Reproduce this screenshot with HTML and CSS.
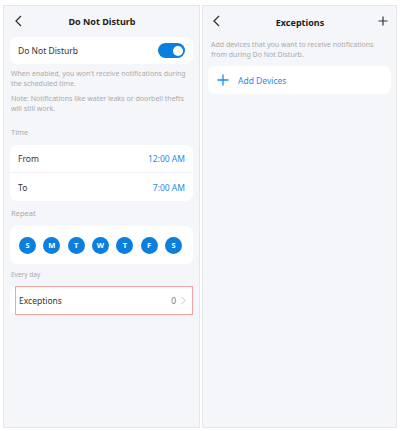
FILE: index.html
```html
<!DOCTYPE html>
<html lang="en">
<head>
    <meta charset="UTF-8">
    <title>Do Not Disturb</title>
    <link rel="stylesheet" href="styles.css">
</head>
<body>
    <div class="screens">
        <div class="screen">
            <div class="nav-bar">
                <svg class="nav-icon" width="10" height="12" viewBox="0 0 10 12"><path d="M7 1 L2 6 L7 11" fill="none" stroke="#333" stroke-width="1.3"/></svg>
                <div class="nav-title">Do Not Disturb</div>
                <span class="nav-spacer"></span>
            </div>
            <div class="card row">
                <span>Do Not Disturb</span>
                <span class="toggle"><span class="knob"></span></span>
            </div>
            <p class="hint first">When enabled, you won't receive notifications during the scheduled time.</p>
            <p class="hint">Note: Notifications like water leaks or doorbell thefts will still work.</p>
            <div class="section-label">Time</div>
            <div class="card">
                <div class="row divided">
                    <span>From</span>
                    <span class="value">12:00 AM</span>
                </div>
                <div class="row">
                    <span>To</span>
                    <span class="value">7:00 AM</span>
                </div>
            </div>
            <div class="section-label">Repeat</div>
            <div class="card days">
                <span class="day">S</span>
                <span class="day">M</span>
                <span class="day">T</span>
                <span class="day">W</span>
                <span class="day">T</span>
                <span class="day">F</span>
                <span class="day">S</span>
            </div>
            <div class="section-label small">Every day</div>
            <div class="card">
                <div class="row highlighted">
                    <span>Exceptions</span>
                    <span class="count">0
                        <svg width="6" height="9" viewBox="0 0 6 9"><path d="M1.5 1 L5 4.5 L1.5 8" fill="none" stroke="#c4c4c8" stroke-width="1"/></svg>
                    </span>
                </div>
            </div>
        </div>

        <div class="screen right">
            <div class="nav-bar">
                <svg class="nav-icon" width="10" height="12" viewBox="0 0 10 12"><path d="M7 1 L2 6 L7 11" fill="none" stroke="#333" stroke-width="1.3"/></svg>
                <div class="nav-title">Exceptions</div>
                <svg class="nav-icon" width="10" height="10" viewBox="0 0 10 10"><path d="M5 0.5 V9.5 M0.5 5 H9.5" fill="none" stroke="#333" stroke-width="1.2"/></svg>
            </div>
            <p class="hint top">Add devices that you want to receive notifications from during Do Not Disturb.</p>
            <div class="card row add">
                <svg width="12" height="12" viewBox="0 0 12 12"><path d="M6 0.5 V11.5 M0.5 6 H11.5" fill="none" stroke="#1a8cf0" stroke-width="1.3"/></svg>
                <span>Add Devices</span>
            </div>
        </div>
    </div>
</body>
</html>
```

FILE: styles.css
```css
body {
    margin: 0;
    font-family: "Noto Sans", Roboto, sans-serif;
    background-color: #ffffff;
    color: #333;
}
.screens {
    display: flex;
    gap: 2px;
    padding: 5px 4px 3px 3px;
    height: 423px;
}
.screen {
    flex: 0 0 197px;
    box-sizing: border-box;
    background-color: #f5f6fa;
    border: 1px solid #e6e6ea;
    padding: 0 6px;
    display: flex;
    flex-direction: column;
}
.screen.right {
    flex: 0 0 195px;
    padding: 0 5px;
}
.nav-bar {
    height: 30px;
    display: flex;
    align-items: center;
    justify-content: space-between;
    padding: 0 3px 0 4px;
}
.nav-title {
    font-size: 9px;
    font-weight: bold;
    color: #222;
}
.right .nav-title {
    padding-top: 3px;
}
.nav-spacer {
    width: 10px;
}
.card {
    background-color: white;
    border-radius: 7px;
}
.row {
    display: flex;
    align-items: center;
    justify-content: space-between;
    height: 27px;
    padding: 0 8px;
    font-size: 8.5px;
    color: #333;
}
.card.row {
    margin-top: 1px;
}
.divided {
    border-bottom: 1px solid #f2f2f4;
    height: 28px;
    box-sizing: border-box;
}
.row + .row {
    height: 28px;
}
.toggle {
    width: 27px;
    height: 15px;
    border-radius: 8px;
    background-color: #0b7fe0;
    display: flex;
    align-items: center;
    justify-content: flex-end;
    padding-right: 2px;
    box-sizing: border-box;
}
.knob {
    width: 10px;
    height: 10px;
    border-radius: 50%;
    background-color: white;
}
.hint {
    margin: 0;
    font-size: 7px;
    line-height: 9.5px;
    color: #aaa;
    padding: 0 1px;
}
.hint.first {
    margin-top: 5px;
}
.hint + .hint {
    margin-top: 6px;
}
.hint.top {
    margin-top: 4px;
    padding: 0 3px;
}
.section-label {
    font-size: 7.5px;
    color: #aaa;
    padding: 0 1px;
    margin: 14px 0 8px;
}
.section-label + .card {
    margin-top: 0;
}
.card + .section-label {
    margin-top: 7px;
}
.section-label.small {
    font-size: 6.5px;
    margin: 6px 0 7px;
}
.value {
    color: #1a8cf0;
}
.days {
    display: flex;
    justify-content: space-between;
    align-items: center;
    height: 38px;
    padding: 0 11px 0 9px;
}
.day {
    width: 17px;
    height: 17px;
    border-radius: 50%;
    background-color: #0b7fdd;
    color: white;
    font-size: 7.5px;
    font-weight: bold;
    display: flex;
    align-items: center;
    justify-content: center;
}
.highlighted {
    height: 29px;
    box-sizing: border-box;
    margin-left: 5px;
    padding-left: 3px;
    padding-right: 6px;
    border: 1px solid #f3a2a2;
}
.count {
    display: flex;
    align-items: center;
    gap: 4px;
    color: #777;
}
.card.add {
    margin-top: 7px;
    height: 28px;
    justify-content: flex-start;
    gap: 9px;
    padding-left: 9px;
    color: #1a8cf0;
}
```
